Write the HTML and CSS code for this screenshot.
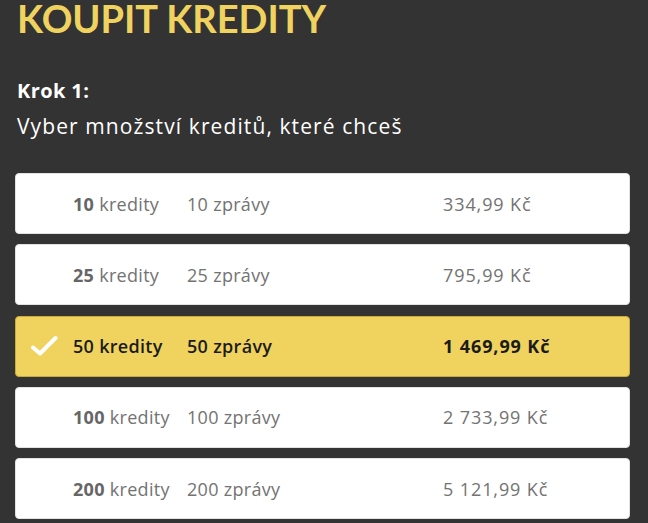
FILE: index.html
```html
<!DOCTYPE html>
<html>
<head lang="cs">
    <meta charset="UTF-8">
    <title>Koupit kredity</title>
    <link rel="stylesheet" href="styles.css">
</head>
<body>

<div class="page">
    <h1>KOUPIT KREDITY</h1>

    <h2>Krok 1:</h2>
    <p class="lead">Vyber množství kreditů, které chceš</p>

    <ul class="packs">
        <li>
            <span class="check"></span>
            <span class="credits"><b>10</b> kredity</span>
            <span class="msgs">10 zprávy</span>
            <span class="price">334,99 Kč</span>
        </li>
        <li>
            <span class="check"></span>
            <span class="credits"><b>25</b> kredity</span>
            <span class="msgs">25 zprávy</span>
            <span class="price">795,99 Kč</span>
        </li>
        <li class="current">
            <span class="check">
                <svg width="28" height="22" viewBox="0 0 28 22">
                    <path d="M3 12.5 L10 18.5 L25.5 3" fill="none" stroke="#fff" stroke-width="4" stroke-linecap="round" stroke-linejoin="round"/>
                </svg>
            </span>
            <span class="credits"><b>50</b> kredity</span>
            <span class="msgs">50 zprávy</span>
            <span class="price">1 469,99 Kč</span>
        </li>
        <li>
            <span class="check"></span>
            <span class="credits"><b>100</b> kredity</span>
            <span class="msgs">100 zprávy</span>
            <span class="price">2 733,99 Kč</span>
        </li>
        <li>
            <span class="check"></span>
            <span class="credits"><b>200</b> kredity</span>
            <span class="msgs">200 zprávy</span>
            <span class="price">5 121,99 Kč</span>
        </li>
    </ul>
</div>

</body>
</html>
```

FILE: styles.css
```css
* {
    padding: 0;
    margin: 0;
    list-style: none;
    box-sizing: border-box;
}
body {
    background: #333;
    font-family: "Open Sans", Lato, sans-serif;
    color: #fff;
}
.page {
    padding: 0 18px 0 15px;
}
h1 {
    font: 700 38px/37px Lato, sans-serif;
    color: #f0d35e;
    padding-left: 2px;
}
h2 {
    font: 700 20px/24px "Open Sans", sans-serif;
    letter-spacing: 0.4px;
    margin-top: 42px;
    padding-left: 2px;
}
.lead {
    font: 400 21px/25px "Open Sans", sans-serif;
    letter-spacing: 1.1px;
    margin-top: 11px;
    padding-left: 2px;
}
.packs {
    margin-top: 34px;
    display: flex;
    flex-direction: column;
    gap: 10.25px;
}
.packs li {
    height: 61px;
    display: grid;
    grid-template-columns: 57px 114px 256px 1fr;
    align-items: center;
    background: #fff;
    border: 1px solid #e2e2e2;
    border-radius: 4px;
    font-size: 18px;
    letter-spacing: 0.3px;
    color: #737373;
}
.packs b {
    color: #666;
    font-weight: 700;
}
.price {
    letter-spacing: 0.9px;
}
.check {
    display: flex;
    align-items: center;
    padding-left: 14px;
}
.packs li.current {
    background: #f0d35e;
    border-color: #c9ab3c;
    color: #1b1b1b;
    font-weight: 600;
}
.packs li.current b {
    color: #1b1b1b;
    font-weight: 600;
}
.packs li.current .price {
    font-weight: 700;
}
```
